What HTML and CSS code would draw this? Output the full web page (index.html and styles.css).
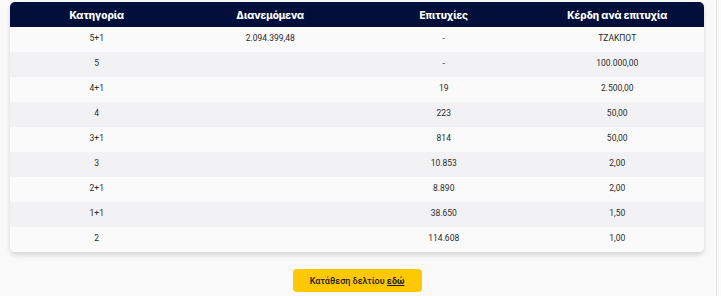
FILE: index.html
```html
<!DOCTYPE html>
<html lang="el">
<head>
<meta charset="utf-8">
<link rel="stylesheet" href="styles.css">
</head>
<body>
<div class="page">
  <div class="card">
    <table class="results">
      <thead>
        <tr><th>Κατηγορία</th><th>Διανεμόμενα</th><th>Επιτυχίες</th><th>Κέρδη ανά επιτυχία</th></tr>
      </thead>
      <tbody>
        <tr><td>5+1</td><td>2.094.399,48</td><td>-</td><td>ΤΖΑΚΠΟΤ</td></tr>
        <tr><td>5</td><td></td><td>-</td><td>100.000,00</td></tr>
        <tr><td>4+1</td><td></td><td>19</td><td>2.500,00</td></tr>
        <tr><td>4</td><td></td><td>223</td><td>50,00</td></tr>
        <tr><td>3+1</td><td></td><td>814</td><td>50,00</td></tr>
        <tr><td>3</td><td></td><td>10.853</td><td>2,00</td></tr>
        <tr><td>2+1</td><td></td><td>8.890</td><td>2,00</td></tr>
        <tr><td>1+1</td><td></td><td>38.650</td><td>1,50</td></tr>
        <tr><td>2</td><td></td><td>114.608</td><td>1,00</td></tr>
      </tbody>
    </table>
  </div>
  <div class="actions">
    <a class="btn" href="#">Κατάθεση δελτίου <span class="here">εδώ</span></a>
  </div>
</div>
</body>
</html>
```
FILE: styles.css
```css
html, body {
  margin: 0;
  padding: 0;
  background: #f9f9f9;
}
.page {
  width: 717px;
  height: 296px;
  box-sizing: border-box;
  padding: 2px 12px 0 10px;
  border-right: 1px solid #e2e2e2;
}
.card {
  border-radius: 5px;
  overflow: hidden;
  box-shadow: 0 3px 5px rgba(0, 0, 0, 0.14);
  background: #fafafa;
}
.results {
  width: 100%;
  border-collapse: collapse;
  table-layout: fixed;
  font-family: Roboto, "Liberation Sans", sans-serif;
}
.results th {
  background: #020f3b;
  color: #ffffff;
  font-family: Inter, "Noto Sans", sans-serif;
  font-weight: 800;
  font-size: 10px;
  height: 25px;
  padding: 0;
  text-align: center;
}
.results td {
  height: 25px;
  padding: 0;
  line-height: 23px;
  vertical-align: top;
  text-align: center;
  font-size: 8.5px;
  color: #2b2b2b;
}
.results tbody tr:nth-child(odd) td { background: #fafafa; }
.results tbody tr:nth-child(even) td { background: #f2f2f4; }
.actions {
  display: flex;
  justify-content: center;
  padding-top: 17px;
}
.btn {
  display: flex;
  align-items: center;
  justify-content: center;
  width: 129px;
  height: 23px;
  background: #ffc800;
  border-radius: 4px;
  color: #1a1a1a;
  text-decoration: none;
  font-family: Roboto, "Liberation Sans", sans-serif;
  font-weight: 500;
  font-size: 9px;
  white-space: pre;
}
.here {
  font-weight: 700;
  text-decoration: underline;
}
```
